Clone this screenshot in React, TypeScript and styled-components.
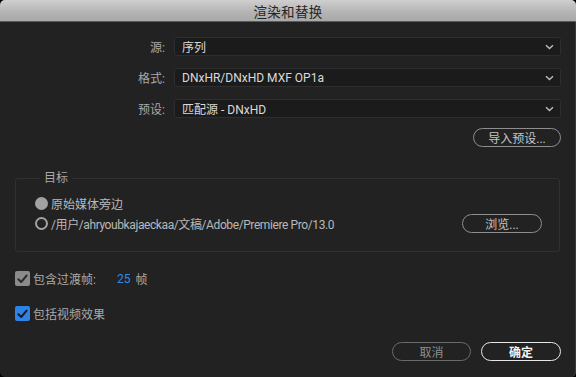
import React from 'react';
import styled, { createGlobalStyle } from 'styled-components';

const GlobalStyle = createGlobalStyle`
  html, body {
    margin: 0;
    padding: 0;
    background: #000;
  }
  body {
    font-family: Roboto, "Noto Sans CJK SC", sans-serif;
    font-size: 12px;
  }
`;

const Chevron = (): JSX.Element => (
  <svg width="9" height="6" viewBox="0 0 9 6" fill="none">
    <path d="M1 1.2 L4.5 4.6 L8 1.2" stroke="#bcbcbc" strokeWidth="1.4" />
  </svg>
);

const Check = ({ color }: { color: string }): JSX.Element => (
  <svg width="11" height="10" viewBox="0 0 11 10" fill="none">
    <path d="M1.4 5.2 L4.2 8 L9.6 1.6" stroke={color} strokeWidth="2" strokeLinecap="round" strokeLinejoin="round" />
  </svg>
);

type Option = { label: string; value: string };

const rows: Option[] = [
  { label: '源:', value: '序列' },
  { label: '格式:', value: 'DNxHR/DNxHD MXF OP1a' },
  { label: '预设:', value: '匹配源 - DNxHD' },
];

const App = (): JSX.Element => (
  <>
    <GlobalStyle />
    <Dialog>
      <TitleBar>渲染和替换</TitleBar>
      <Body>
        <FormGrid>
          {rows.map(({ label, value }) => (
            <React.Fragment key={label}>
              <FieldLabel>{label}</FieldLabel>
              <Dropdown>
                <span>{value}</span>
                <Chevron />
              </Dropdown>
            </React.Fragment>
          ))}
        </FormGrid>

        <ImportRow>
          <PillButton $width={88}>导入预设...</PillButton>
        </ImportRow>

        <Group>
          <Legend>目标</Legend>
          <RadioRow>
            <Radio $checked />
            <RadioText>原始媒体旁边</RadioText>
          </RadioRow>
          <RadioRow>
            <Radio />
            <RadioText $tight>/用户/ahryoubkajaeckaa/文稿/Adobe/Premiere Pro/13.0</RadioText>
            <PillButton $width={80}>浏览...</PillButton>
          </RadioRow>
        </Group>

        <CheckRow $top={19}>
          <CheckBox $color="#8b8b8b"><Check color="#2a2a2a" /></CheckBox>
          <CheckLabel $width={81}>包含过渡帧:</CheckLabel>
          <FrameCount>25</FrameCount>
          <CheckLabel>帧</CheckLabel>
        </CheckRow>
        <CheckRow $top={20}>
          <CheckBox $color="#2d83e6"><Check color="#1c1c1c" /></CheckBox>
          <CheckLabel>包括视频效果</CheckLabel>
        </CheckRow>

        <Footer>
          <PillButton $width={79} $variant="muted">取消</PillButton>
          <PillButton $width={80} $variant="primary">确定</PillButton>
        </Footer>
      </Body>
    </Dialog>
  </>
);

const Dialog = styled.div`
  width: 576px;
  height: 377px;
  box-sizing: border-box;
  border-radius: 5px;
  overflow: hidden;
  background: #222222;
  display: flex;
  flex-direction: column;
  box-shadow: inset -1px 0 0 #3a3a3a;
`;

const TitleBar = styled.div`
  height: 22px;
  flex: 0 0 22px;
  box-sizing: border-box;
  display: flex;
  align-items: center;
  justify-content: center;
  background: linear-gradient(#cfcfcf, #b3b3b3 60%, #a9a9a9);
  border-bottom: 1px solid #5c5c5c;
  color: #262626;
  font-size: 13.5px;
  letter-spacing: 0.3px;
`;

const Body = styled.div`
  flex: 1;
  display: flex;
  flex-direction: column;
  padding: 0 15px 16px 15px;
`;

const FormGrid = styled.div`
  margin-top: 15px;
  display: grid;
  grid-template-columns: 150px 1fr;
  grid-auto-rows: 19px;
  column-gap: 9px;
  row-gap: 12px;
`;

const FieldLabel = styled.div`
  display: flex;
  align-items: center;
  justify-content: flex-end;
  color: #a9a9a9;
  font-size: 12px;
`;

const Dropdown = styled.div`
  display: flex;
  align-items: center;
  justify-content: space-between;
  box-sizing: border-box;
  padding: 0 6px 0 7px;
  background: #1b1b1b;
  border: 1px solid #2e2e2e;
  border-radius: 3px;
  color: #dadada;
  font-size: 12px;
`;

const ImportRow = styled.div`
  display: flex;
  justify-content: flex-end;
  margin-top: 10px;
`;

const PillButton = styled.div<{ $width: number; $variant?: 'normal' | 'muted' | 'primary' }>`
  width: ${({ $width }) => $width}px;
  height: 19px;
  box-sizing: border-box;
  display: flex;
  align-items: center;
  justify-content: center;
  flex-shrink: 0;
  border-radius: 10px;
  font-size: 12px;
  border: 1.5px solid ${({ $variant }) => ($variant === 'primary' ? '#e6e6e6' : $variant === 'muted' ? '#6a6a6a' : '#8e8e8e')};
  color: ${({ $variant }) => ($variant === 'primary' ? '#f2f2f2' : $variant === 'muted' ? '#8e8e8e' : '#c6c6c6')};
  font-weight: ${({ $variant }) => ($variant === 'primary' ? 700 : 400)};
`;

const Group = styled.fieldset`
  margin: 24px 1px 0 0;
  padding: 8px 17px 18px 19px;
  border: 1px solid #303030;
  border-radius: 3px;
  display: flex;
  flex-direction: column;
`;

const Legend = styled.legend`
  padding: 0 4px;
  margin-left: 5px;
  line-height: 14px;
  color: #a9a9a9;
  font-size: 12px;
`;

const RadioRow = styled.div`
  display: flex;
  align-items: center;
  height: 20px;
  gap: 3px;
`;

const Radio = styled.span<{ $checked?: boolean }>`
  width: 13px;
  height: 13px;
  box-sizing: border-box;
  border-radius: 50%;
  flex-shrink: 0;
  background: ${({ $checked }) => ($checked ? '#a2a2a2' : 'transparent')};
  border: 2px solid #a2a2a2;
`;

const RadioText = styled.span<{ $tight?: boolean }>`
  flex: 1;
  color: #b8b8b8;
  font-size: 12px;
  letter-spacing: ${({ $tight }) => ($tight ? '-0.4px' : 'normal')};
`;

const CheckRow = styled.div<{ $top: number }>`
  margin-top: ${({ $top }) => $top}px;
  display: flex;
  align-items: center;
  height: 15px;
  gap: 3px;
`;

const CheckBox = styled.span<{ $color: string }>`
  width: 15px;
  height: 15px;
  border-radius: 2px;
  background: ${({ $color }) => $color};
  display: flex;
  align-items: center;
  justify-content: center;
`;

const CheckLabel = styled.span<{ $width?: number }>`
  color: #a9a9a9;
  font-size: 12px;
  width: ${({ $width }) => ($width ? `${$width}px` : 'auto')};
`;

const FrameCount = styled.span`
  color: #2d8ceb;
  font-size: 12px;
  margin-right: 2px;
`;

const Footer = styled.div`
  margin-top: auto;
  display: flex;
  justify-content: flex-end;
  gap: 10px;
`;

export default App;
